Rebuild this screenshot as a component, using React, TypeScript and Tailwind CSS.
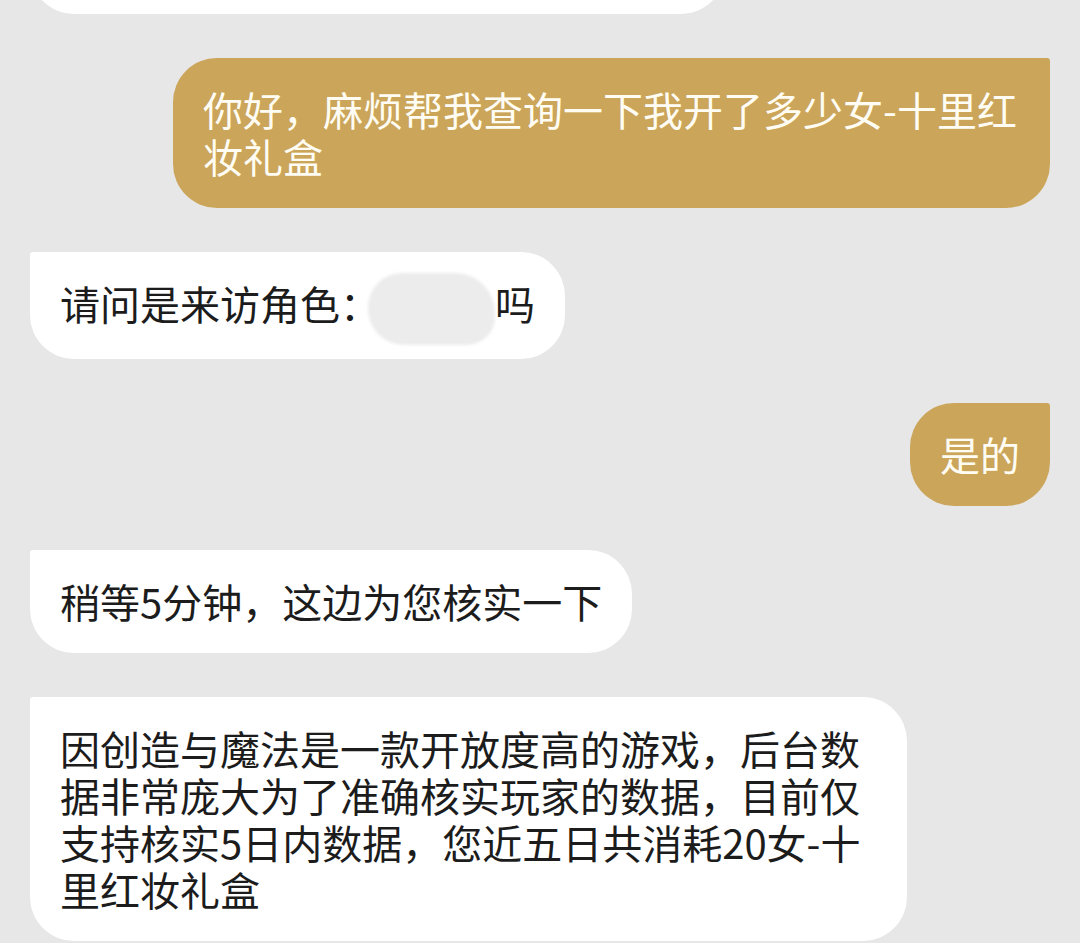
const font = { fontFamily: '"Noto Sans CJK SC", "Noto Sans", sans-serif' }

type Msg = { side: 'left' | 'right'; text: React.ReactNode }

const messages: Msg[] = [
  { side: 'right', text: '你好，麻烦帮我查询一下我开了多少女-十里红妆礼盒' },
  {
    side: 'left',
    text: (
      <>
        请问是来访角色：
        <span className="inline-block align-middle ml-[-12px] my-[-14px] w-[127px] h-[72px] rounded-[34px_40px_28px_36px] bg-[#ececec] blur-[1.5px]"></span>
        吗
      </>
    ),
  },
  { side: 'right', text: '是的' },
  { side: 'left', text: '稍等5分钟，这边为您核实一下' },
  {
    side: 'left',
    text: '因创造与魔法是一款开放度高的游戏，后台数据非常庞大为了准确核实玩家的数据，目前仅支持核实5日内数据，您近五日共消耗20女-十里红妆礼盒',
  },
]

function Bubble({ side, text }: Msg) {
  const isRight = side === 'right'
  return (
    <div
      className={`max-w-[877px] px-[30px] py-[28px] text-[40px] leading-[47px] rounded-[44px] ${
        isRight
          ? 'self-end bg-[#cba55a] text-[#fffdf3] rounded-tr-[3px]'
          : 'self-start bg-white text-[#1c1c1c] rounded-tl-[3px]'
      }`}
    >
      {text}
    </div>
  )
}

export default function App() {
  return (
    <div className="w-[1080px] h-[943px] overflow-hidden bg-[#e7e7e7]" style={font}>
      <div className="flex flex-col gap-[44px] px-[30px]">
        <div className="self-start w-[695px] h-[104px] mt-[-90px] bg-white rounded-[44px] rounded-tl-[3px]"></div>
        {messages.map((m, i) => (
          <Bubble key={i} side={m.side} text={m.text} />
        ))}
      </div>
    </div>
  )
}
